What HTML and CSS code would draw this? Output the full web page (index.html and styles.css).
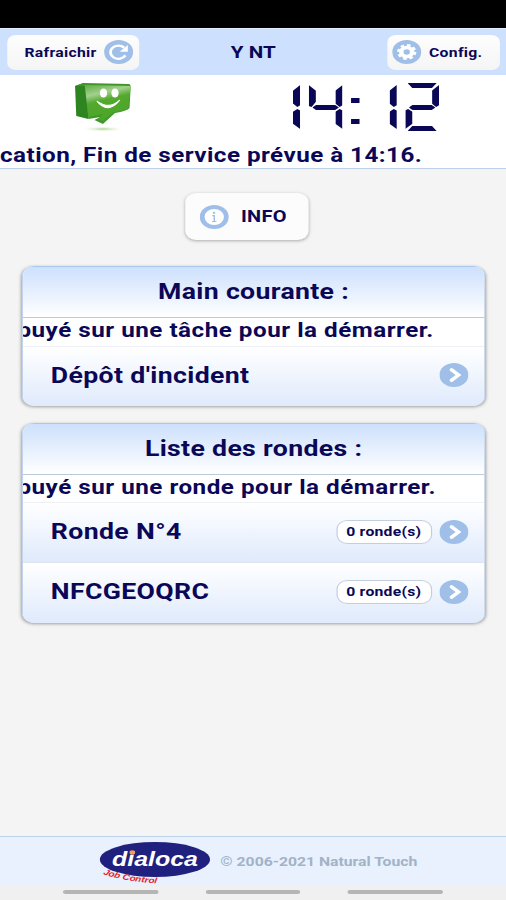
FILE: index.html
```html
<!DOCTYPE html>
<html lang="fr">
<head>
  <meta charset="UTF-8">
  <title>Job Control</title>
  <link rel="stylesheet" href="styles.css">
</head>
<body>
<div class="screen">

  <div class="statusbar"></div>

  <header class="toolbar">
    <button class="btn btn-refresh">
      <span>Rafraichir</span>
      <svg class="icon" viewBox="0 0 24 24">
        <circle cx="12" cy="12" r="12" fill="#9fbfe9"/>
        <path d="M16.6 7.6A6.6 6.6 0 1 0 17.6 15.4" fill="none" stroke="#fff" stroke-width="2.3"/>
        <path d="M19.6 5v6.8h-6.8z" fill="#fff"/>
      </svg>
    </button>
    <h1>Y NT</h1>
    <button class="btn btn-config">
      <svg class="icon" viewBox="0 0 24 24">
        <circle cx="12" cy="12" r="12" fill="#9fbfe9"/>
        <circle cx="12" cy="12" r="4.5" fill="none" stroke="#fff" stroke-width="3.7"/>
        <circle cx="12" cy="12" r="6.7" fill="none" stroke="#fff" stroke-width="2.6" stroke-dasharray="2.9 2.362"/>
      </svg>
      <span>Config.</span>
    </button>
  </header>

  <section class="state">
    <div class="state-top">
      <svg class="smiley" viewBox="0 0 48 50">
        <defs>
          <linearGradient id="face" x1="0" y1="0" x2="0.3" y2="1">
            <stop offset="0" stop-color="#5fae43"/>
            <stop offset="0.3" stop-color="#a3d08e"/>
            <stop offset="0.5" stop-color="#54a92f"/>
            <stop offset="1" stop-color="#4ba428"/>
          </linearGradient>
          <radialGradient id="shade">
            <stop offset="0" stop-color="#a9d48a"/>
            <stop offset="1" stop-color="#fff" stop-opacity="0"/>
          </radialGradient>
        </defs>
        <ellipse cx="24" cy="47" rx="18" ry="2.8" fill="url(#shade)"/>
        <path d="M1 4 8 1 13 4 12 37 2 34z" fill="#2e8420"/>
        <path d="M1 4 8 1 46 2 47 4 46 26Q44 29 34 31L24 42 17 38 22 35 12 37 9 4z" fill="#3f972b"/>
        <path d="M9 3 47 4 45 26Q42 29 33 30L24 39 20 37 24 32 12 35z" fill="url(#face)"/>
        <ellipse cx="24.5" cy="11" rx="3" ry="4.6" fill="#fff"/>
        <ellipse cx="34" cy="11" rx="3" ry="4.6" fill="#fff"/>
        <path d="M19 19Q28 33 38 18Q29 28 19 19z" fill="#fff" stroke="#fff"/>
      </svg>
      <div class="clock" role="img" aria-label="14:12">
        <div class="digit"><i class="b"></i><i class="c"></i></div>
        <div class="digit"><i class="f"></i><i class="g"></i><i class="b"></i><i class="c"></i></div>
        <div class="colon"><i></i><i></i></div>
        <div class="digit"><i class="b"></i><i class="c"></i></div>
        <div class="digit"><i class="a"></i><i class="b"></i><i class="g"></i><i class="e"></i><i class="d"></i></div>
      </div>
    </div>
    <p class="ticker">cation, Fin de service prévue à 14:16.</p>
  </section>

  <main>
    <button class="btn btn-info">
      <svg class="icon" viewBox="0 0 24 24">
        <circle cx="12" cy="12" r="10" fill="#fff" stroke="#9fbfe9" stroke-width="4"/>
        <circle cx="11.8" cy="7.8" r="1.1" fill="#9fbfe9"/>
        <path d="M10.4 10.7h1.6v5.6M10.2 16.5h3.6" fill="none" stroke="#9fbfe9" stroke-width="1.2"/>
      </svg>
      <span>INFO</span>
    </button>

    <section class="card">
      <h2>Main courante :</h2>
      <p class="ticker">puyé sur une tâche pour la démarrer.</p>
      <div class="row">
        <span class="label">Dépôt d'incident</span>
        <svg class="icon" viewBox="0 0 24 24"><circle cx="12" cy="12" r="12" fill="#9fbfe9"/><path d="M10 6.8 15.8 12 10 17.2" fill="none" stroke="#fff" stroke-width="3.2" stroke-linecap="round"/></svg>
      </div>
    </section>

    <section class="card">
      <h2>Liste des rondes :</h2>
      <p class="ticker">puyé sur une ronde pour la démarrer.</p>
      <div class="row">
        <span class="label">Ronde N°4</span>
        <span class="count">0 ronde(s)</span>
        <svg class="icon" viewBox="0 0 24 24"><circle cx="12" cy="12" r="12" fill="#9fbfe9"/><path d="M10 6.8 15.8 12 10 17.2" fill="none" stroke="#fff" stroke-width="3.2" stroke-linecap="round"/></svg>
      </div>
      <div class="row">
        <span class="label">NFCGEOQRC</span>
        <span class="count">0 ronde(s)</span>
        <svg class="icon" viewBox="0 0 24 24"><circle cx="12" cy="12" r="12" fill="#9fbfe9"/><path d="M10 6.8 15.8 12 10 17.2" fill="none" stroke="#fff" stroke-width="3.2" stroke-linecap="round"/></svg>
      </div>
    </section>
  </main>

  <footer>
    <svg class="logo" viewBox="0 0 92 46">
      <ellipse cx="46" cy="18.5" rx="45.5" ry="17.5" fill="#20217f"/>
      <text x="10.5" y="25" class="logo-name" textLength="71" lengthAdjust="spacingAndGlyphs">dialoca</text>
      <circle cx="27.3" cy="11.5" r="2.3" fill="#f0a05a"/>
      <path id="curve" d="M3 33Q20 41 60 43.5" fill="none"/>
      <text class="logo-sub"><textPath href="#curve">Job Control</textPath></text>
    </svg>
    <span>© 2006-2021 Natural Touch</span>
  </footer>

  <nav class="navbar"><i></i><i></i><i></i></nav>

</div>
</body>
</html>
```

FILE: styles.css
```css
body {
  margin: 0;
  overflow: hidden;
  background: #f4f4f4;
}

/* the handset picture is wider than the layout */
.screen {
  display: flex;
  flex-direction: column;
  width: 418px;
  height: 900px;
  transform: scaleX(1.2105);
  transform-origin: 0 0;
  font-family: Roboto, sans-serif;
  font-weight: bold;
  color: #0b0757;
  background: #f4f4f4;
}

h1, h2, p {
  margin: 0;
}

.statusbar {
  height: 28px;
  background: #000;
}

/* Top bar */
.toolbar {
  display: grid;
  grid-template-columns: 109px 1fr 93px;
  align-items: center;
  box-sizing: border-box;
  height: 47px;
  padding: 0 5.5px 0 6px;
  border-top: 1px solid #e3edfc;
  background: #cde0fd;
}

.toolbar h1 {
  font-size: 17px;
  text-align: center;
  transform: translateX(-8px);
}

.btn {
  display: flex;
  align-items: center;
  justify-content: center;
  box-sizing: border-box;
  height: 35px;
  padding: 0;
  border: 0;
  border-radius: 7px;
  font: bold 13px Roboto, sans-serif;
  letter-spacing: 0.25px;
  color: #0b0757;
  background: linear-gradient(#fdfdfd, #f5f5f5);
}

.btn-refresh {
  gap: 6px;
  padding-left: 9px;
}

.btn-config {
  gap: 6px;
  padding-right: 9px;
}

.icon {
  flex: none;
  width: 24px;
  height: 24px;
}

/* Clock and status */
.state {
  box-sizing: border-box;
  height: 94px;
  border-bottom: 1px solid #bdd0ea;
  background: #fff;
}

.state-top {
  display: flex;
  height: 67px;
}

.smiley {
  width: 48px;
  height: 50px;
  margin: 7px 0 0 61px;
}

.clock {
  display: flex;
  height: 48px;
  margin: 8px 0 0 111px;
}

.digit {
  display: grid;
  grid-template-columns: 6px 16px 6px;
  grid-template-rows: 5px 17px 5px 16px 5px;
  margin-right: 7px;
}

.digit i, .colon i {
  background: #0b0757;
}

.digit .a {
  grid-area: 1 / 1 / 2 / 4;
  margin: 0 2px;
  clip-path: polygon(0 0, 100% 0, 84% 100%, 16% 100%);
}

.digit .b {
  grid-area: 1 / 3 / 4 / 4;
  margin: 2px 0 3px;
  clip-path: polygon(100% 0, 100% 92%, 60% 100%, 0 84%, 0 26%);
}

.digit .c {
  grid-area: 3 / 3 / 6 / 4;
  margin: 4px 0 2px;
  clip-path: polygon(60% 0, 100% 8%, 100% 100%, 0 74%, 0 14%);
}

.digit .d {
  grid-area: 5 / 1 / 6 / 4;
  margin: 0 2px;
  clip-path: polygon(16% 0, 84% 0, 100% 100%, 0 100%);
}

.digit .e {
  grid-area: 3 / 1 / 6 / 2;
  margin: 4px 0 2px;
  clip-path: polygon(0 8%, 40% 0, 100% 14%, 100% 74%, 0 100%);
}

.digit .f {
  grid-area: 1 / 1 / 4 / 2;
  margin: 2px 0 3px;
  clip-path: polygon(0 0, 100% 26%, 100% 76%, 40% 100%, 0 96%);
}

.digit .g {
  grid-area: 3 / 1 / 4 / 4;
  margin: 0 3px;
  clip-path: polygon(0 50%, 14% 0, 86% 0, 100% 50%, 86% 100%, 14% 100%);
}

.colon {
  display: grid;
  grid-template-rows: 5px 5px;
  gap: 16px;
  width: 7px;
  margin: 14.5px 4px 0 0;
}

.colon + .digit {
  margin-left: -1.3px;
}

.ticker {
  overflow: hidden;
  font-size: 20px;
  letter-spacing: 0.38px;
  line-height: 27px;
  white-space: nowrap;
}

main {
  flex: 1;
  padding: 24px 18px 0;
}

.btn-info {
  gap: 10px;
  width: 102px;
  height: 47px;
  margin: 0 auto 26px 135px;
  padding-right: 6px;
  border-radius: 9px;
  font-size: 16.5px;
  background: #fcfcfc;
  box-shadow: 0 1px 3px rgba(0, 0, 0, 0.3);
}

/* Cards */
.card {
  overflow: hidden;
  box-sizing: border-box;
  width: 383px;
  margin-bottom: 17px;
  border: 0 solid #c3d5ec;
  border-width: 0 1px;
  border-radius: 10px;
  background: #fff;
  box-shadow: 0 1px 3px rgba(0, 0, 0, 0.35);
}

.card h2 {
  box-sizing: border-box;
  height: 52px;
  border-top: 1px solid #aac8ee;
  border-bottom: 1px solid #bccbdc;
  font-size: 22px;
  letter-spacing: 0.28px;
  line-height: 50px;
  text-align: center;
  background: linear-gradient(#cde0fd, #fff);
}

.card .ticker {
  height: 27.5px;
  letter-spacing: 0.42px;
  line-height: 24px;
  text-indent: -4.5px;
}

.row {
  display: flex;
  align-items: center;
  box-sizing: border-box;
  height: 60.5px;
  padding: 0 13px 2px 23px;
  border-top: 1px solid #dde5f0;
  background: linear-gradient(#fff, #dfeafc);
}

.ticker + .row {
  height: 60px;
  border-top-color: #edf0f4;
}

.label {
  flex: 1;
  font-size: 22px;
  letter-spacing: 0.3px;
}

.count {
  box-sizing: border-box;
  width: 79px;
  height: 24px;
  margin-right: 6.5px;
  border: 1px solid #c3cede;
  border-radius: 9px;
  font-size: 13px;
  letter-spacing: 0.2px;
  line-height: 22px;
  text-align: center;
  background: #fff;
}

/* Footer */
footer {
  display: flex;
  align-items: center;
  box-sizing: border-box;
  height: 49px;
  padding-left: 82px;
  border-top: 1.5px solid #bcd3ee;
  font-size: 13px;
  color: #a2b3c8;
  background: #e8f1fd;
}

.logo {
  width: 92px;
  height: 46px;
  margin: 6px 8px 0 0;
}

.logo-name {
  font: italic bold 21px "Liberation Sans", sans-serif;
  fill: #fff;
}

.logo-sub {
  font: italic bold 8.2px "Liberation Sans", sans-serif;
  fill: #e0252f;
}

.navbar {
  display: flex;
  justify-content: center;
  gap: 39px;
  height: 15px;
  background: #f0f0f0;
}

.navbar i {
  width: 78.5px;
  height: 4px;
  margin-top: 5px;
  border-radius: 2px;
  background: #b5b5b5;
}
```
